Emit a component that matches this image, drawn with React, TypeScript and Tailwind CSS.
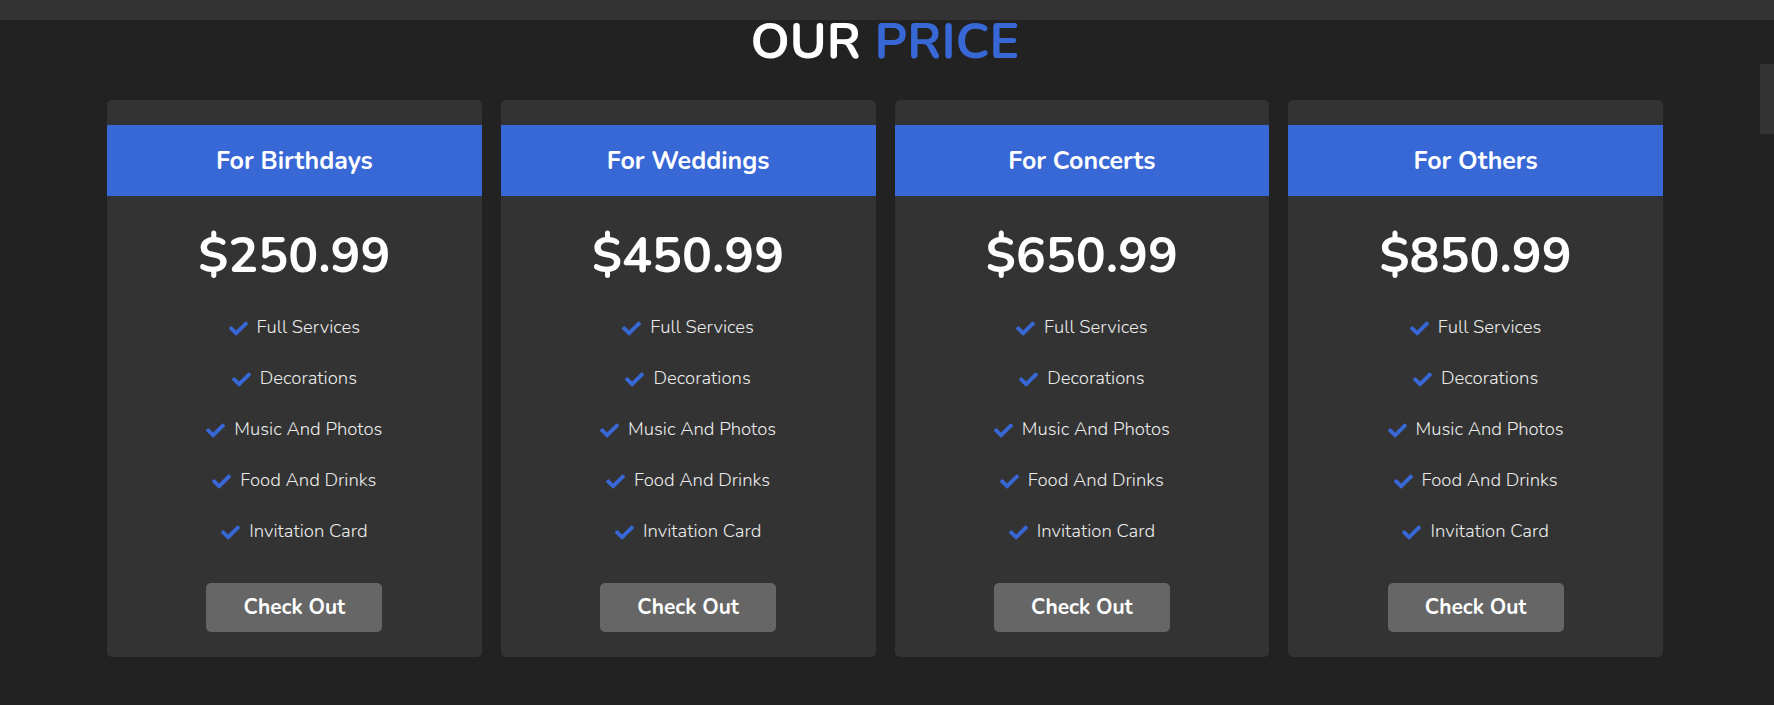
import { FaCheck } from "react-icons/fa";

interface Plan {
  title: string;
  price: string;
}

const plans: Plan[] = [
  { title: "For Birthdays", price: "$250.99" },
  { title: "For Weddings", price: "$450.99" },
  { title: "For Concerts", price: "$650.99" },
  { title: "For Others", price: "$850.99" },
];

const features = [
  "Full Services",
  "Decorations",
  "Music And Photos",
  "Food And Drinks",
  "Invitation Card",
];

const PriceCard = ({ title, price }: Plan) => {
  return (
    <div className="flex flex-col items-center rounded-[5px] bg-[#333] pt-[25px] pb-[25px]">
      <h3 className="flex h-[71px] w-full items-center justify-center bg-[#3867d6] pt-[2px] text-[25px] font-bold text-white">
        {title}
      </h3>
      <div className="mt-[30px] text-[50px] leading-[60px] font-bold text-white">
        {price}
      </div>
      <ul className="mt-[29px] flex flex-col gap-y-[25px]">
        {features.map((feature) => (
          <li
            key={feature}
            className="flex h-[26px] items-center justify-center gap-x-[9px] text-[18.5px] font-light text-[#ececec]"
          >
            <FaCheck className="size-[19px] text-[#3867d6]" />
            {feature}
          </li>
        ))}
      </ul>
      <button className="mt-[38px] h-[49px] w-[176px] rounded-[5px] bg-[#666] text-[21px] font-bold text-white">
        Check Out
      </button>
    </div>
  );
};

export default function App() {
  return (
    <div className="min-h-screen bg-[#222] font-['Nunito','Lato','Open_Sans',sans-serif]">
      <div className="h-5 bg-[#333]" />
      <div className="flex">
        <main className="flex-1 pl-[107px]">
          <div className="w-[1556px]">
            <h1 className="text-center text-[50px] leading-[44px] font-bold text-white">
              OUR <span className="text-[#3867d6]">PRICE</span>
            </h1>
            <div className="mt-[36px] grid grid-cols-4 gap-x-[19px]">
              {plans.map((plan) => (
                <PriceCard key={plan.title} {...plan} />
              ))}
            </div>
          </div>
        </main>
        <div className="w-[14px]">
          <div className="mt-[44px] h-[70px] bg-[#333]" />
        </div>
      </div>
    </div>
  );
}
